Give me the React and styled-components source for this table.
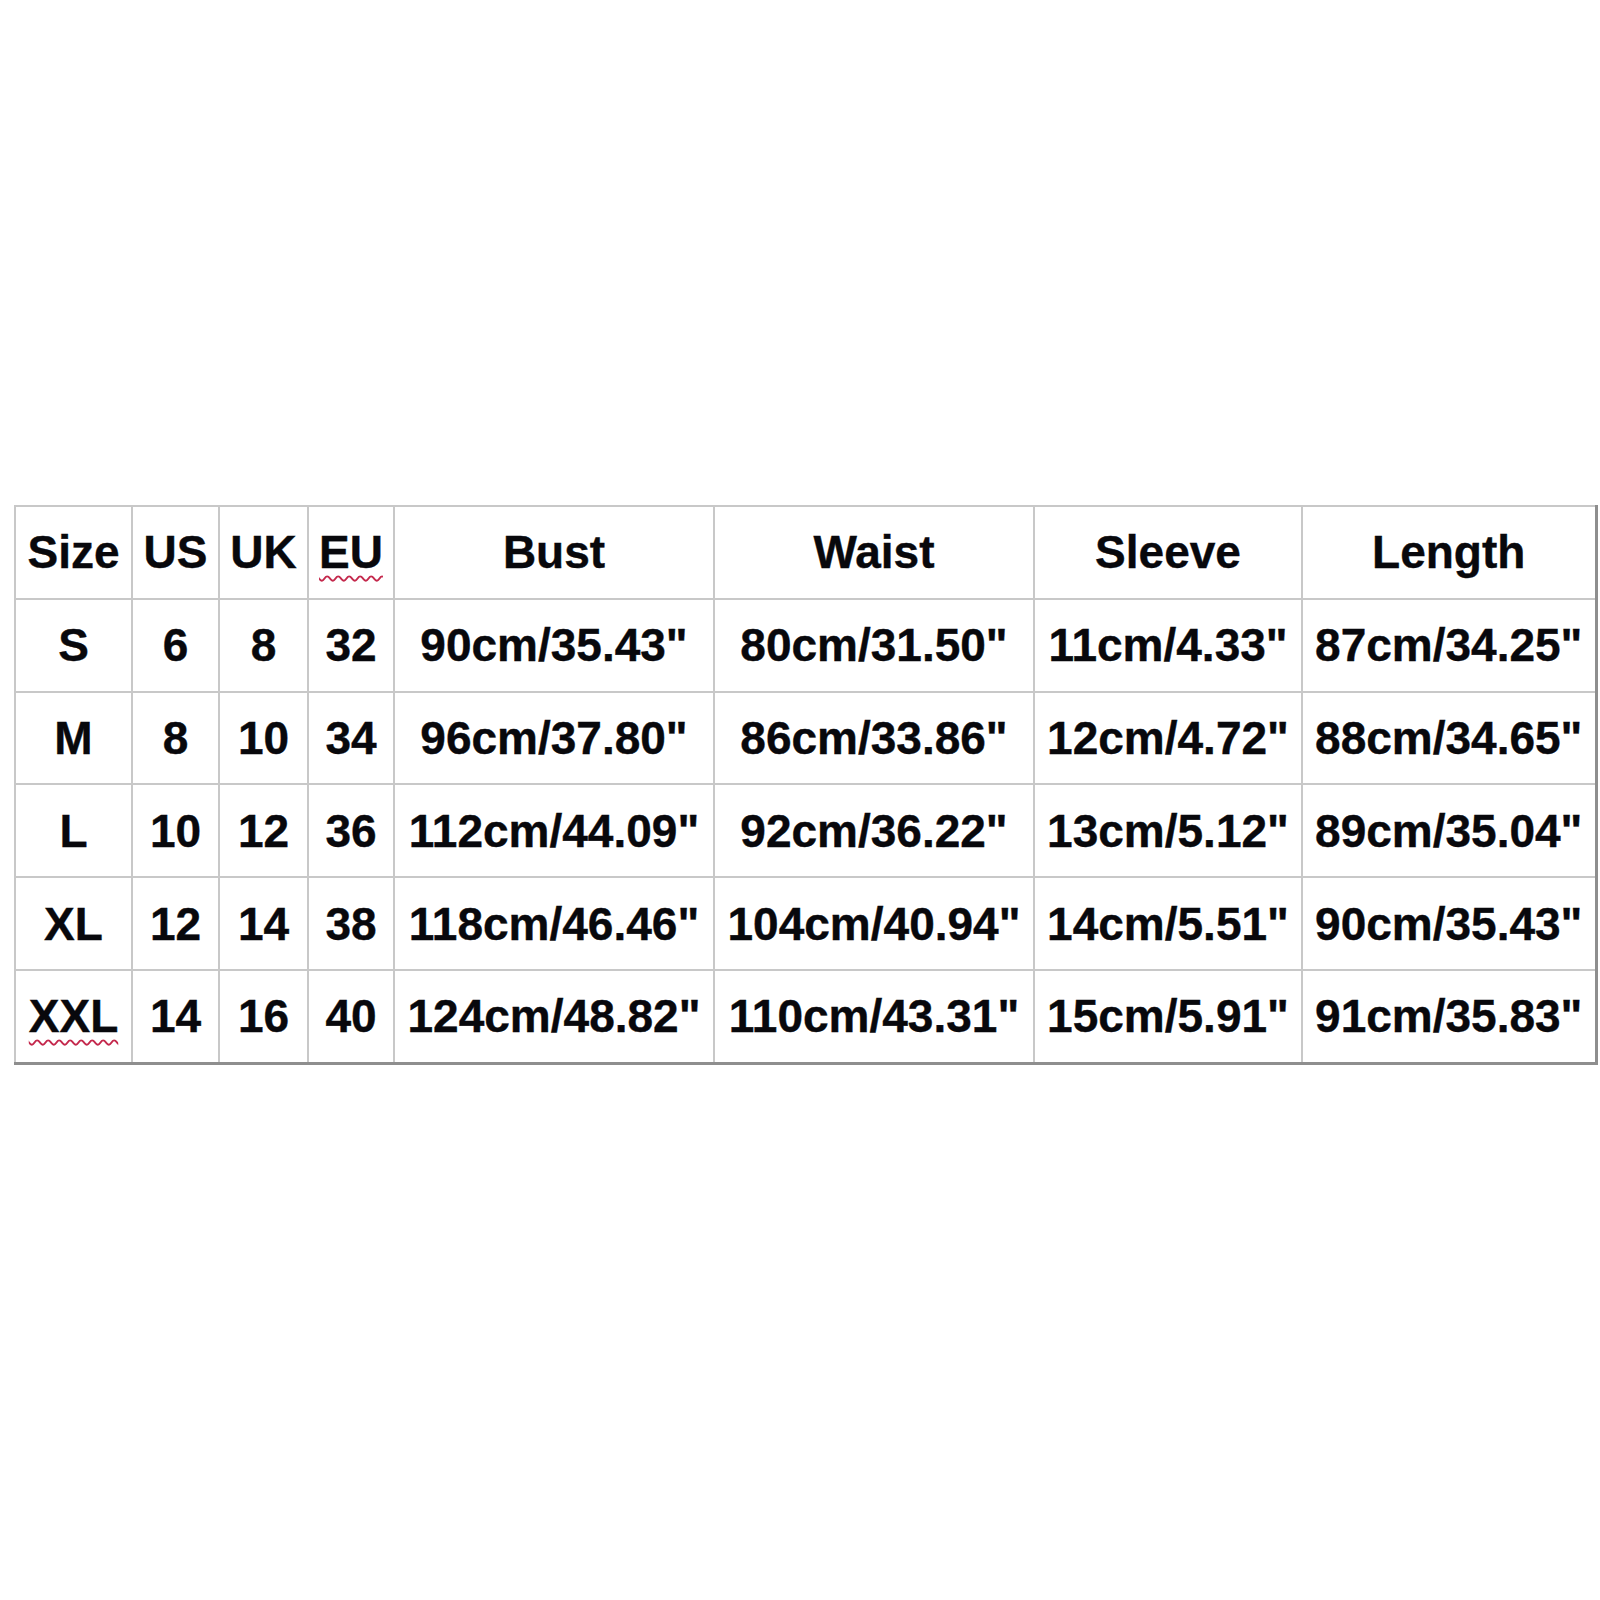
import styled, { createGlobalStyle } from "styled-components";

const GlobalStyle = createGlobalStyle`
  html, body {
    margin: 0;
    padding: 0;
    background: #ffffff;
  }
  body {
    font-family: "Liberation Sans", Arial, sans-serif;
  }
`;

const columns = [
  { key: "size", title: "Size", width: 117, squiggle: false },
  { key: "us", title: "US", width: 87 },
  { key: "uk", title: "UK", width: 89 },
  { key: "eu", title: "EU", width: 86, squiggle: true },
  { key: "bust", title: "Bust", width: 320 },
  { key: "waist", title: "Waist", width: 320 },
  { key: "sleeve", title: "Sleeve", width: 268 },
  { key: "length", title: "Length", width: 294 },
];

const rows = [
  ["S", "6", "8", "32", "90cm/35.43\"", "80cm/31.50\"", "11cm/4.33\"", "87cm/34.25\""],
  ["M", "8", "10", "34", "96cm/37.80\"", "86cm/33.86\"", "12cm/4.72\"", "88cm/34.65\""],
  ["L", "10", "12", "36", "112cm/44.09\"", "92cm/36.22\"", "13cm/5.12\"", "89cm/35.04\""],
  ["XL", "12", "14", "38", "118cm/46.46\"", "104cm/40.94\"", "14cm/5.51\"", "90cm/35.43\""],
  ["XXL", "14", "16", "40", "124cm/48.82\"", "110cm/43.31\"", "15cm/5.91\"", "91cm/35.83\""],
];

function App() {
  return (
    <>
      <GlobalStyle />
      <Page>
        <SizeTable>
          <colgroup>
            {columns.map((c) => (
              <col key={c.key} style={{ width: c.width }} />
            ))}
          </colgroup>
          <thead>
            <tr>
              {columns.map((c) => (
                <Cell as="th" key={c.key}>
                  {c.squiggle ? <Misspelled>{c.title}</Misspelled> : c.title}
                </Cell>
              ))}
            </tr>
          </thead>
          <tbody>
            {rows.map((r) => (
              <tr key={r[0]}>
                {r.map((v, i) => (
                  <Cell key={i}>
                    {r[0] === "XXL" && i === 0 ? <Misspelled>{v}</Misspelled> : v}
                  </Cell>
                ))}
              </tr>
            ))}
          </tbody>
        </SizeTable>
      </Page>
    </>
  );
}

export default App;

const Page = styled.div`
  width: 1600px;
  height: 1600px;
  box-sizing: border-box;
  padding: 505px 5px 0 14px;
  background: #ffffff;
`;

// outer edge: light on top/left, darker on right/bottom (wider so it wins the collapse)
const SizeTable = styled.table`
  table-layout: fixed;
  border-collapse: collapse;
  width: 1581px;
  border-top: 2px solid #cacaca;
  border-left: 2px solid #cacaca;
  border-right: 3px solid #8e8e8e;
  border-bottom: 3px solid #8e8e8e;
`;

const Cell = styled.td`
  height: 90.8px;
  padding: 0;
  border: 2px solid #c8c8c8;
  text-align: center;
  vertical-align: middle;
  font-family: "Liberation Sans", Arial, sans-serif;
  font-weight: 700;
  font-size: 46px;
  color: #08080c;
  white-space: nowrap;
  overflow: visible;
  line-height: 1;
  -webkit-text-stroke: 0.4px #08080c;
`;

const Misspelled = styled.span`
  text-decoration: underline wavy #c4284c;
  text-decoration-thickness: 1.5px;
  text-underline-offset: 7px;
`;
